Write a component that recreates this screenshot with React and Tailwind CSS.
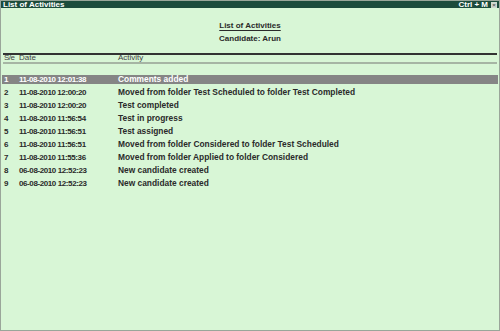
const rows = [
  ['1', '11-08-2010 12:01:38', 'Comments added'],
  ['2', '11-08-2010 12:00:20', 'Moved from folder Test Scheduled to folder Test Completed'],
  ['3', '11-08-2010 12:00:20', 'Test completed'],
  ['4', '11-08-2010 11:56:54', 'Test in progress'],
  ['5', '11-08-2010 11:56:51', 'Test assigned'],
  ['6', '11-08-2010 11:56:51', 'Moved from folder Considered to folder Test Scheduled'],
  ['7', '11-08-2010 11:55:36', 'Moved from folder Applied to folder Considered'],
  ['8', '06-08-2010 12:52:23', 'New candidate created'],
  ['9', '06-08-2010 12:52:23', 'New candidate created'],
];

export default function App() {
  return (
    <div className="w-[500px] h-[331px] flex flex-col bg-[#d8f6d6] border border-[#9aa69a] overflow-hidden text-[#2a2a2a]"
      style={{ fontFamily: '"Liberation Sans", Arial, sans-serif' }}>
      {/* Title bar */}
      <div className="h-[7px] shrink-0 bg-[#1c4c3c] flex items-center justify-between px-[2px] text-white font-bold text-[8px] leading-none">
        <span className="mt-[1px]">List of Activities</span>
        <div className="flex items-center gap-[3px]">
          <span className="mt-[1px]">Ctrl + M</span>
          <span className="w-[6px] h-[6px] bg-[#cfd8cf] text-[#555] text-[6px] flex items-center justify-center">×</span>
        </div>
      </div>

      {/* Heading */}
      <div className="flex flex-col items-center pt-[14px] font-bold text-[8px] leading-none">
        <span className="underline underline-offset-2">List of Activities</span>
        <span className="mt-[5px]">Candidate: Arun</span>
      </div>

      {/* Column header */}
      <div className="mt-[10px] mx-[2px] border-t-2 border-[#333]">
        <div className="h-[6px] flex items-center text-[8px] leading-none px-[1px] text-[#444] overflow-visible">
          <span className="w-[15px] tracking-[-0.5px]">S/e</span>
          <span className="w-[99px]">Date</span>
          <span>Activity</span>
        </div>
        <div className="mt-[1px] border-t-2 border-[#a6b5a4]" />
      </div>

      {/* Rows */}
      <div className="mt-[9px] flex flex-col">
        {rows.map((r, i) => (
          <div key={r[0]} className="h-[13px] flex items-center mx-[1px]">
            <div className={`h-[9px] w-full flex items-center px-[2px] font-bold text-[8px] leading-none
              ${i === 0 ? 'bg-[#858585] text-white' : ''}`}>
              <span className="w-[15px]">{r[0]}</span>
              <span className="w-[99px] tracking-[-0.4px]">{r[1]}</span>
              <span className="text-[8.4px]">{r[2]}</span>
            </div>
          </div>
        ))}
      </div>
    </div>
  );
}
